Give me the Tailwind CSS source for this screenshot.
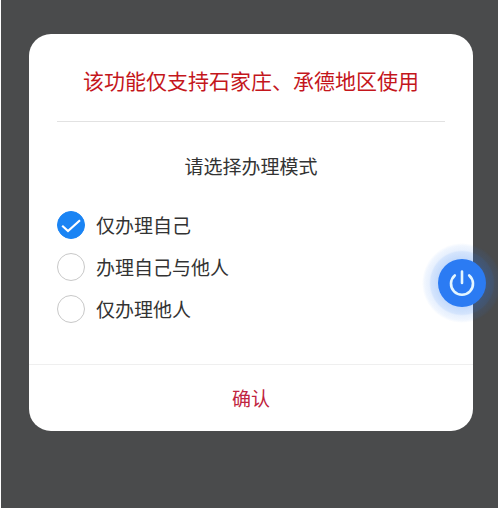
<!DOCTYPE html>
<html lang="zh-CN">
<head>
    <meta charset="UTF-8">
    <meta name="viewport" content="width=device-width, initial-scale=1.0">
    <title>请选择办理模式</title>
    <script src="https://cdn.jsdelivr.net/npm/@tailwindcss/browser@4"></script>
</head>
<body class="min-h-screen border-l border-white bg-[#4a4b4c] px-7 pt-[34px] pb-8 font-['Noto_Sans_CJK_SC',sans-serif] text-[#333]">

    <form class="mr-[-3px] overflow-hidden rounded-[22px] bg-white">
        <div class="px-7 pb-[41px]">
            <h1 class="border-b border-[#e2e2e2] pt-8 pb-[27px] text-center text-[21px] leading-7 whitespace-nowrap text-[#c4161c]">该功能仅支持石家庄、承德地区使用</h1>

            <fieldset>
                <legend class="w-full pt-[30px] pb-[31px] text-center text-[19px] leading-7">请选择办理模式</legend>
                <div class="flex flex-col gap-[14px] text-[19px] leading-7">
                    <label class="flex items-center gap-[11px]">
                        <span class="grid size-7">
                            <input type="radio" name="mode" value="self" checked class="peer col-start-1 row-start-1 size-7 appearance-none rounded-full border border-[#c8c8c8] checked:border-[#1a84f4] checked:bg-[#1a84f4]">
                            <svg class="pointer-events-none invisible col-start-1 row-start-1 size-7 peer-checked:visible" viewBox="0 0 28 28" fill="none" stroke="#fff" stroke-width="2.2"><path d="M5.2 14.8l5.8 5.2L23 9.2"/></svg>
                        </span>
                        仅办理自己
                    </label>
                    <label class="flex items-center gap-[11px]">
                        <span class="grid size-7">
                            <input type="radio" name="mode" value="both" class="peer col-start-1 row-start-1 size-7 appearance-none rounded-full border border-[#c8c8c8] checked:border-[#1a84f4] checked:bg-[#1a84f4]">
                            <svg class="pointer-events-none invisible col-start-1 row-start-1 size-7 peer-checked:visible" viewBox="0 0 28 28" fill="none" stroke="#fff" stroke-width="2.2"><path d="M5.2 14.8l5.8 5.2L23 9.2"/></svg>
                        </span>
                        办理自己与他人
                    </label>
                    <label class="flex items-center gap-[11px]">
                        <span class="grid size-7">
                            <input type="radio" name="mode" value="other" class="peer col-start-1 row-start-1 size-7 appearance-none rounded-full border border-[#c8c8c8] checked:border-[#1a84f4] checked:bg-[#1a84f4]">
                            <svg class="pointer-events-none invisible col-start-1 row-start-1 size-7 peer-checked:visible" viewBox="0 0 28 28" fill="none" stroke="#fff" stroke-width="2.2"><path d="M5.2 14.8l5.8 5.2L23 9.2"/></svg>
                        </span>
                        仅办理他人
                    </label>
                </div>
            </fieldset>
        </div>
        <button type="button" class="block w-full border-t border-[#efefef] py-[19px] text-[19px] leading-7 text-[#c02440]">确认</button>
    </form>

    <!-- floating power button -->
    <button type="button" aria-label="关闭" class="fixed top-[243px] right-[-4px] size-20">
        <svg class="size-20" viewBox="0 0 80 80" fill="none">
            <defs>
                <radialGradient id="halo">
                    <stop offset="0.6" stop-color="#2b7bf3" stop-opacity="0.28"/>
                    <stop offset="0.78" stop-color="#2b7bf3" stop-opacity="0.2"/>
                    <stop offset="0.82" stop-color="#2b7bf3" stop-opacity="0.11"/>
                    <stop offset="0.93" stop-color="#2b7bf3" stop-opacity="0.07"/>
                    <stop offset="1" stop-color="#2b7bf3" stop-opacity="0"/>
                </radialGradient>
            </defs>
            <circle cx="40" cy="40" r="40" fill="url(#halo)"/>
            <circle cx="40" cy="40" r="24" fill="#2b7bf3"/>
            <path d="M32.8 32.4a11 11 0 1 0 14.4 0M40 28.5V40" stroke="#e4f6ff" stroke-width="2.6" stroke-linecap="round"/>
        </svg>
    </button>

</body>
</html>
